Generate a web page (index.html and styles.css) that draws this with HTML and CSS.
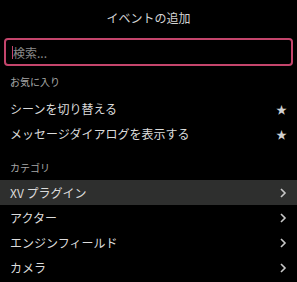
FILE: index.html
```html
<!DOCTYPE html>
<html lang="ja">
<head>
    <meta charset="UTF-8">
    <meta name="viewport" content="width=device-width, initial-scale=1.0">
    <title>イベントの追加</title>
    <link rel="stylesheet" href="styles.css">
</head>
<body>

<div class="panel">
    <h2 class="title">イベントの追加</h2>
    <div class="search"><span class="caret"></span><span class="placeholder">検索...</span></div>

    <p class="section">お気に入り</p>
    <ul class="list">
        <li class="row">シーンを切り替える<span class="star">★</span></li>
        <li class="row">メッセージダイアログを表示する<span class="star">★</span></li>
    </ul>

    <p class="section section-cat">カテゴリ</p>
    <ul class="list">
        <li class="row active">XV プラグイン<svg class="chev" viewBox="0 0 8 12"><path d="M2 2l4 4-4 4"/></svg></li>
        <li class="row">アクター<svg class="chev" viewBox="0 0 8 12"><path d="M2 2l4 4-4 4"/></svg></li>
        <li class="row">エンジンフィールド<svg class="chev" viewBox="0 0 8 12"><path d="M2 2l4 4-4 4"/></svg></li>
        <li class="row">カメラ<svg class="chev" viewBox="0 0 8 12"><path d="M2 2l4 4-4 4"/></svg></li>
    </ul>
</div>

</body>
</html>
```

FILE: styles.css
```css
body { margin: 0; background: #000; font-family: "Noto Sans CJK JP", "Noto Sans", sans-serif; color: #e0e0e0; }
.panel { width: 297px; height: 282px; overflow: hidden; }
.title { margin: 0; height: 36px; line-height: 36px; text-align: center; font-size: 12px; font-weight: normal; color: #d4d4d4; }
.search { margin: 2px 4px 0; height: 24px; border: 2px solid #c4456c; border-radius: 4px; display: flex; align-items: center; padding-left: 6px; }
.caret { width: 1px; height: 13px; background: #c4456c; }
.placeholder { font-size: 12px; color: #8a8a8a; }
.section { margin: 0; height: 30px; line-height: 32px; padding-left: 10px; font-size: 10px; color: #a8a8a8; }
.section-cat { height: 32px; line-height: 40px; margin-top: 2px; }
.list { list-style: none; margin: 0; padding: 0; }
.row { height: 25px; display: flex; align-items: center; justify-content: space-between; padding: 0 10px 0 10px; font-size: 12px; color: #dcdcdc; }
.row.active { background: #2e2f2e; }
.star { font-size: 11px; color: #d0d0d0; }
.chev { width: 8px; height: 12px; fill: none; stroke: #c8c8c8; stroke-width: 1.6; }
```
